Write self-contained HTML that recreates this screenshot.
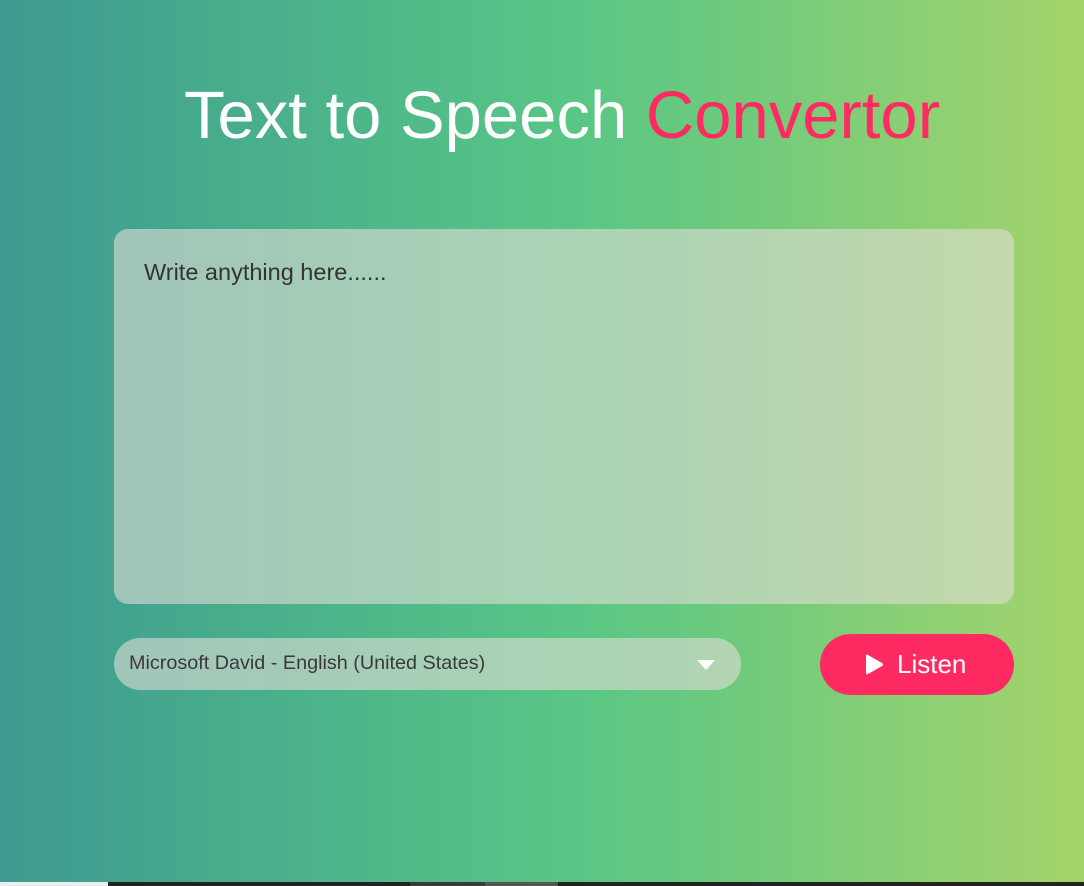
<!DOCTYPE html>
<html><head><style>
html,body{margin:0;padding:0;}
body{width:1084px;height:886px;overflow:hidden;position:relative;font-family:"Liberation Sans",Arial,sans-serif;
background:linear-gradient(90deg,#3d9a91 0%,#4cb48a 30%,#58c686 52%,#6fca7d 68%,#a6d46b 100%);}
h1{position:absolute;top:76px;left:20px;width:1084px;text-align:center;margin:0;font-weight:400;font-size:67px;color:#fff;line-height:80px;}
h1 span{color:#ff2a62;}
.ta{position:absolute;left:114px;top:229px;width:900px;height:375px;border-radius:14px;background:rgba(225,220,214,0.6);}
.ta div{position:absolute;left:30px;top:30px;font-size:23.5px;color:#333;}
.sel{position:absolute;left:114px;top:638px;width:627px;height:52px;border-radius:26px;background:rgba(225,220,214,0.6);}
.sel div{position:absolute;left:15px;top:14px;font-size:19.8px;color:#3a3a3a;}
.sel svg{position:absolute;left:582px;top:21px;}
.btn{position:absolute;left:820px;top:634px;width:194px;height:61px;border-radius:31px;background:#ff2a62;color:#fff;font-size:26px;}
.btn svg{position:absolute;left:45px;top:20px;}
.btn span{position:absolute;left:77px;top:15px;}
.bar{position:absolute;top:882px;height:4px;}
</style></head><body>
<h1>Text to Speech <span>Convertor</span></h1>
<div class="ta"><div>Write anything here......</div></div>
<div class="sel"><div>Microsoft David - English (United States)</div>
<svg width="20" height="12" viewBox="0 0 20 12"><path d="M1 1 H19 L11 10 Q10 11 9 10 Z" fill="#fff"/></svg></div>
<div class="btn"><svg width="19" height="21" viewBox="0 0 19 21"><path d="M1 2 Q1 0 3 1 L17 9 Q19 10.5 17 12 L3 20 Q1 21 1 19 Z" fill="#fff"/></svg><span>Listen</span></div>
<div class="bar" style="left:0;width:108px;background:#eee"></div>
<div class="bar" style="left:108px;width:302px;background:#222"></div>
<div class="bar" style="left:410px;width:75px;background:#3a3a3a"></div>
<div class="bar" style="left:485px;width:73px;background:#555"></div>
<div class="bar" style="left:558px;width:526px;background:#222"></div>
</body></html>
